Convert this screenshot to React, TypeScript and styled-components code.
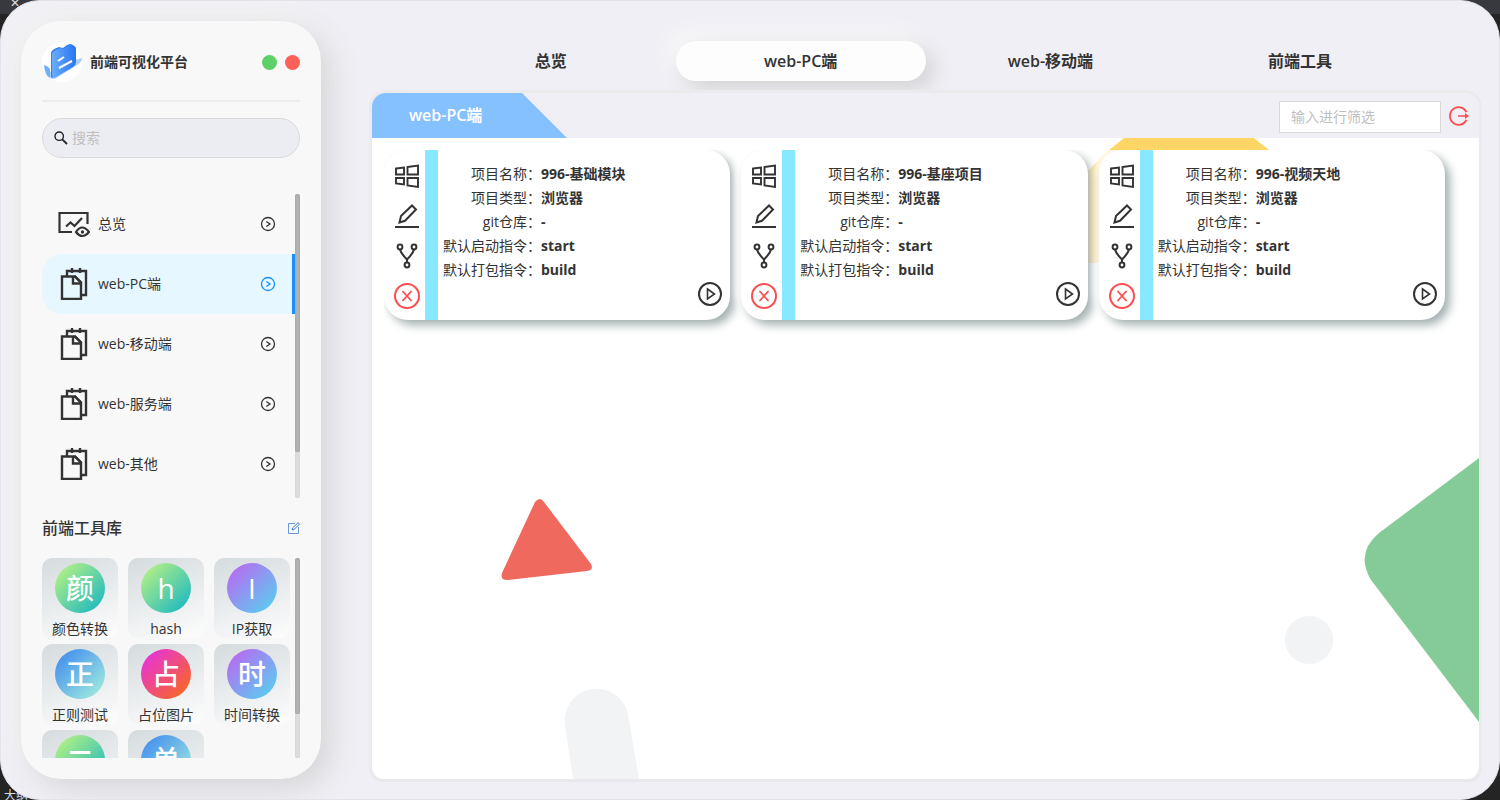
import React from 'react';
import styled, { createGlobalStyle, css } from 'styled-components';

const GlobalStyle = createGlobalStyle`
  *, *::before, *::after { box-sizing: border-box; }
  html, body, #root { height: 100%; }
  body {
    margin: 0;
    background: #242424;
    color: #333;
    font: 14px/24px "Open Sans", "Noto Sans CJK SC", sans-serif;
    overflow: hidden;
  }
  button, input { font: inherit; color: inherit; }
  button { border: 0; padding: 0; background: none; cursor: pointer; }
  h1, h2, p, dl, dd, ul { margin: 0; padding: 0; }
  ul { list-style: none; }
  svg { display: block; }
`;

const Desktop = styled.div`
  position: relative;
  min-height: 100%;
  height: 100%;
  background: linear-gradient(#38383f 14px, #242424 14px);
`;

const Stray = styled.span<{ $bottom?: boolean }>`
  position: absolute;
  left: ${p => (p.$bottom ? 4 : 10)}px;
  ${p => (p.$bottom ? 'bottom: -8px;' : 'top: -2px;')}
  color: #ddd;
  font-size: 12px;
  line-height: ${p => (p.$bottom ? 24 : 10)}px;
  white-space: nowrap;
`;

const Shell = styled.div`
  position: relative;
  display: flex;
  gap: 48px;
  height: 100%;
  padding: 20px;
  border: 1px solid #e4e3ea;
  border-radius: 40px;
  background: #f0eff5;
  overflow: hidden;
`;

const Sidebar = styled.aside`
  display: flex;
  flex-direction: column;
  flex: 0 0 300px;
  padding: 21px;
  border-radius: 40px;
  background: #f8f8f8;
  box-shadow: 10px 10px 30px #d6d6d8, -10px -10px 30px #f4f4f4, 0 0 2px #e4e4e4;
`;

const Brand = styled.header`
  display: flex;
  align-items: center;
  padding-bottom: 18px;
  border-bottom: 2px solid #ececec;
`;

const BrandName = styled.h1`
  flex: 1;
  margin-left: 8px;
  font-size: 14px;
  font-weight: 600;
`;

const Dot = styled.button<{ $color: string }>`
  width: 15px;
  height: 15px;
  margin-left: 8px;
  border-radius: 50%;
  background: ${p => p.$color};
`;

const SearchBox = styled.label`
  display: flex;
  align-items: center;
  gap: 4px;
  flex: 0 0 40px;
  margin-top: 16px;
  padding: 0 11px;
  border: 1px solid #d9d9d9;
  border-radius: 20px;
  background: #ecedf3;
`;

const SearchInput = styled.input`
  flex: 1;
  min-width: 0;
  padding: 0;
  border: 0;
  outline: 0;
  background: none;
  &::placeholder { color: #bfbfbf; opacity: 1; }
`;

const Scroller = styled.div`
  display: flex;
  justify-content: space-between;
  overflow: hidden;
`;

const NavScroller = styled(Scroller)`
  flex: 1;
  margin-top: 36px;
`;

const Track = styled.div`
  flex: 0 0 5px;
  border-radius: 3px;
  background: #dedede;
  box-shadow: inset 0 0 3px #d0d0d0;
`;

const Thumb = styled.div<{ $size: number }>`
  height: ${p => p.$size}%;
  border-radius: 3px;
  background: #b2b2b2;
  box-shadow: inset 0 0 2px #999;
`;

const NavList = styled.ul`
  flex: 1;
`;

const NavItem = styled.button<{ $active?: boolean }>`
  display: flex;
  align-items: center;
  gap: 8px;
  width: 100%;
  height: 60px;
  padding: 0 16px;
  border-right: 3px solid transparent;
  text-align: left;
  ${p => p.$active && css`
    border-right-color: #1890ff;
    border-radius: 20px 0 0 20px;
    background: #e6f7ff;
  `}
  span { flex: 1; }
  svg:last-child { color: ${p => (p.$active ? '#1890ff' : '#333')}; }
`;

const ToolHead = styled.div`
  display: flex;
  align-items: center;
  justify-content: space-between;
  margin: 18px 0;
`;

const ToolTitle = styled.h2`
  font-size: 16px;
  font-weight: 500;
  line-height: 24px;
`;

const ToolScroller = styled(Scroller)`
  flex: 0 0 200px;
`;

const ToolGrid = styled.div`
  display: grid;
  grid-template-columns: repeat(3, 76px);
  grid-auto-rows: 80px;
  gap: 6px 10px;
`;

const Tool = styled.button`
  display: flex;
  flex-direction: column;
  align-items: center;
  gap: 4px;
  padding-top: 5px;
  border-radius: 10px;
  background: linear-gradient(160deg, #d5dbde, #fdfdfd);
  white-space: nowrap;
`;

const ToolMark = styled.span<{ $fill: string }>`
  flex: 0 0 50px;
  width: 50px;
  border-radius: 50%;
  background: linear-gradient(135deg, ${p => p.$fill});
  color: #fff;
  font-size: 28px;
  line-height: 50px;
  font-weight: 500;
`;

const Main = styled.main`
  display: flex;
  flex-direction: column;
  flex: 1;
  min-width: 0;
`;

const Tabs = styled.nav`
  display: flex;
  padding: 20px 54px 9px 57px;
`;

const Tab = styled.button<{ $active?: boolean }>`
  flex: 1;
  height: 40px;
  border-radius: 20px;
  font-size: 16px;
  font-weight: 600;
  ${p => p.$active && css`
    background: #fdfdfe;
    box-shadow: 8px 8px 20px #d3d3d5, -8px -8px 20px #f8f8f8;
  `}
`;

const Panel = styled.section`
  position: relative;
  display: flex;
  flex-direction: column;
  flex: 1;
  border: 3px solid #ebebed;
  border-bottom: 0;
  border-radius: 17px 17px 14px 14px;
  margin-right: -3px;
  background: #f0eff5;
  overflow: hidden;
  box-shadow: 0 3px 0 #e9e9eb;
`;

const PanelHead = styled.div`
  display: flex;
  align-items: center;
  flex: 0 0 45px;
  padding-right: 10px;
`;

const PanelTitle = styled.h2`
  align-self: stretch;
  width: 195px;
  padding-left: 37px;
  background: #85c1ff;
  clip-path: polygon(0 0, 150px 0, 100% 100%, 0 100%);
  color: #fff;
  font-size: 16px;
  font-weight: 600;
  line-height: 45px;
`;

const Filter = styled.input`
  width: 162px;
  height: 32px;
  margin: 2px 8px 0 auto;
  padding: 0 11px;
  border: 1px solid #d9d9d9;
  background: #fff;
  outline: 0;
  &::placeholder { color: #bfbfbf; opacity: 1; }
`;

const Exit = styled.button`
  color: #ff4d4f;
`;

const Canvas = styled.div`
  position: relative;
  flex: 1;
  padding: 12px 10px 0 12px;
  background: #fff;
  overflow: hidden;
`;

const Backdrop = styled.svg`
  position: absolute;
  top: 0;
  right: 0;
`;

const Cards = styled.div`
  position: relative;
  display: grid;
  grid-template-columns: repeat(3, 1fr);
  gap: 11px;
  padding: 0 24px 24px 0;
  overflow: hidden;
`;

const Card = styled.article`
  display: flex;
  height: 170px;
  border-radius: 24px;
  background: #fff;
  box-shadow: 5px 5px 10px #a4afb0, -5px -5px 10px #fff;
`;

const Actions = styled.div`
  display: flex;
  flex-direction: column;
  align-items: center;
  gap: 12px;
  flex: 0 0 54px;
  padding: 12px 0 0 5px;
  border-right: 13px solid #87e8ff;
`;

const Action = styled.button<{ $danger?: boolean }>`
  color: ${p => (p.$danger ? '#ff4d4f' : '#333')};
`;

const Details = styled.dl`
  flex: 1;
  padding: 12px 0 0 5px;
`;

const Detail = styled.div`
  display: flex;
  dt { width: 98px; text-align: right; white-space: nowrap; }
  dd { font-weight: 700; white-space: nowrap; }
`;

const Run = styled.button`
  align-self: flex-end;
  margin: 0 7px 13px 0;
`;

const Logo = () => (
  <svg width="40" height="40" viewBox="0 0 40 40" aria-hidden="true">
    <defs>
      <linearGradient id="logoFace" x1="0" y1="0" x2="1" y2="0">
        <stop offset="0" stopColor="#6aacfc" />
        <stop offset="1" stopColor="#2775f4" />
      </linearGradient>
    </defs>
    <circle cx="20" cy="20" r="20" fill="#fff" />
    <path d="M6 31L33 18l7-2q0 4-5 7L16 35q-5 4-9 0Z" fill="#a9cffe" />
    <path d="M2 23q4 1 6 4v9q-5-2-6-13Z" fill="#6fb0fb" />
    <path d="M9 11q0-2 3-4l5-2 4 1 4-3 3-1q3 0 6 4l-2 3-21 8v19l-2-1Z" fill="#2f80f6" />
    <path d="M10 12q0-2 4-4l4-2 4 1 4-3 3-1q5 1 5 4v13q0 3-3 5L14 35q-4 2-4-2Z" fill="url(#logoFace)" />
    <path d="M16 19l6-4M17 26l13-7" stroke="#fff" strokeWidth="2" />
  </svg>
);

const SearchIcon = () => (
  <svg width="14" height="14" viewBox="0 0 14 14" fill="none" stroke="#222" strokeWidth="1.4">
    <circle cx="5.2" cy="5.2" r="4.2" /><path d="M8.3 8.3L13 13" strokeWidth="1.8" />
  </svg>
);

const OverviewIcon = () => (
  <svg width="32" height="32" viewBox="0 0 32 32" fill="none" stroke="#333" strokeWidth="2.2">
    <path d="M14 24H1.500V5H29.500v11" />
    <path d="M8 18.500l4.500-4 4 3.500 7.500-8" />
    <path d="M18 24q6-9 13 0-7 8-13 0Z" />
    <circle cx="24.500" cy="24" r="1.700" fill="#333" stroke="none" />
  </svg>
);

const FilesIcon = () => (
  <svg width="32" height="32" viewBox="0 0 32 32" fill="none" stroke="#333" strokeWidth="2.4">
    <path d="M4 8.500h13l6 6V31H4Z" />
    <path d="M15 9v6.500h8" />
    <path d="M9 8V3h19v24h-4M14 0v5M22 0v5" />
    <path d="M16.500 8l7 7" />
  </svg>
);

const CircleArrow = () => (
  <svg width="16" height="16" viewBox="0 0 16 16" fill="none" stroke="currentColor" strokeWidth="1.3">
    <circle cx="8" cy="8" r="6.500" /><path d="M6.300 5.500L10 8l-3.700 2.500" />
  </svg>
);

const EditIcon = () => (
  <svg width="12" height="12" viewBox="0 0 12 12" fill="none" stroke="#3b7bd4">
    <path d="M7 1.500H.5v10h10V5" opacity=".75" />
    <path d="M4 8l.5-2L10 .7l1.500 1.400L6 7.500Z" />
  </svg>
);

const WindowsIcon = () => (
  <svg width="28" height="28" viewBox="0 0 28 28" fill="none" stroke="currentColor" strokeWidth="1.900">
    <path d="M3 6.500l8-1v7H3ZM14.500 5L25 3.500v9H14.500ZM3 16h8v6.500l-8-1ZM14.500 16H25v9l-10.500-1.500Z" />
  </svg>
);

const PencilIcon = () => (
  <svg width="28" height="28" viewBox="0 0 28 28" fill="none" stroke="currentColor" strokeWidth="2">
    <path d="M2 25h24" /><path d="M6.500 20.500l1.500-6.500L19 3.500l4 4L12 18.800Z" />
  </svg>
);

const BranchIcon = () => (
  <svg width="28" height="28" viewBox="0 0 28 28" fill="none" stroke="currentColor" strokeWidth="2">
    <circle cx="7" cy="5" r="2.400" /><circle cx="21" cy="5" r="2.400" /><circle cx="14" cy="23" r="2.400" />
    <path d="M7 7.500q1 4 7 10 6-6 7-10M14 17v3.500" />
  </svg>
);

const CloseIcon = () => (
  <svg width="28" height="28" viewBox="0 0 28 28" fill="none" stroke="currentColor" strokeWidth="2">
    <circle cx="14" cy="14" r="12" /><path d="M9.500 9l9 10M18.500 9l-9 10" strokeWidth="1.800" />
  </svg>
);

const PlayIcon = () => (
  <svg width="26" height="26" viewBox="0 0 26 26" fill="none" stroke="currentColor" strokeWidth="2">
    <circle cx="13" cy="13" r="11" /><path d="M10.500 8l7 5-7 5Z" strokeWidth="1.600" />
  </svg>
);

const ExitIcon = () => (
  <svg width="20" height="20" viewBox="0 0 20 20" fill="none" stroke="currentColor" strokeWidth="1.700">
    <path d="M17.500 6a8.800 8.800 0 1 0 0 8M9 10h8" /><path d="M16 7l4 3-4 3Z" fill="currentColor" stroke="none" />
  </svg>
);

const GREEN = '#c3f77d, #10b3c8';
const PURPLE = '#c35ff0, #4fd8f1';
const BLUE = '#3a85ef, #a8f4dd';
const PINK = '#e42df0, #fb6d0c';

const NAV = ['总览', 'web-PC端', 'web-移动端', 'web-服务端', 'web-其他'];
const TABS = ['总览', 'web-PC端', 'web-移动端', '前端工具'];
const TOOLS = [
  ['颜', '颜色转换', GREEN], ['h', 'hash', GREEN], ['I', 'IP获取', PURPLE],
  ['正', '正则测试', BLUE], ['占', '占位图片', PINK], ['时', '时间转换', PURPLE],
  ['二', '二维码', GREEN], ['单', '单位转换', BLUE],
];
const PROJECTS = ['996-基础模块', '996-基座项目', '996-视频天地'];

const Project = ({ name }: { name: string }) => {
  const rows = [
    ['项目名称：', name], ['项目类型：', '浏览器'], ['git仓库：', '-'],
    ['默认启动指令：', 'start'], ['默认打包指令：', 'build'],
  ];
  return (
    <Card>
      <Actions>
        <Action aria-label="窗口"><WindowsIcon /></Action>
        <Action aria-label="编辑"><PencilIcon /></Action>
        <Action aria-label="分支"><BranchIcon /></Action>
        <Action $danger aria-label="删除"><CloseIcon /></Action>
      </Actions>
      <Details>
        {rows.map(([label, value]) => <Detail key={label}><dt>{label}</dt><dd>{value}</dd></Detail>)}
      </Details>
      <Run aria-label="启动"><PlayIcon /></Run>
    </Card>
  );
};

export default function App() {
  return (
    <Desktop>
      <GlobalStyle />
      <Stray $bottom>大纲</Stray>
      <Shell>
        <Sidebar>
          <Brand>
            <Logo />
            <BrandName>前端可视化平台</BrandName>
            <Dot $color="#5fd068" aria-label="最小化" />
            <Dot $color="#fc6058" aria-label="关闭" />
          </Brand>
          <SearchBox>
            <SearchIcon />
            <SearchInput placeholder="搜索" aria-label="搜索" />
          </SearchBox>
          <NavScroller>
            <NavList>
              {NAV.map((label, i) => (
                <li key={label}>
                  <NavItem $active={i === 1}>
                    {i === 0 ? <OverviewIcon /> : <FilesIcon />}
                    <span>{label}</span>
                    <CircleArrow />
                  </NavItem>
                </li>
              ))}
            </NavList>
            <Track><Thumb $size={85} /></Track>
          </NavScroller>
          <ToolHead>
            <ToolTitle>前端工具库</ToolTitle>
            <button aria-label="编辑工具"><EditIcon /></button>
          </ToolHead>
          <ToolScroller>
            <ToolGrid>
              {TOOLS.map(([mark, label, fill]) => (
                <Tool key={label}><ToolMark $fill={fill}>{mark}</ToolMark>{label}</Tool>
              ))}
            </ToolGrid>
            <Track><Thumb $size={78} /></Track>
          </ToolScroller>
        </Sidebar>
        <Main>
          <Tabs>
            {TABS.map((label, i) => <Tab key={label} $active={i === 1}>{label}</Tab>)}
          </Tabs>
          <Panel>
            <PanelHead>
              <PanelTitle>web-PC端</PanelTitle>
              <Filter placeholder="输入进行筛选" aria-label="筛选" />
              <Exit aria-label="退出"><ExitIcon /></Exit>
            </PanelHead>
            <Canvas>
              <Backdrop width="1107" height="641" viewBox="0 0 1107 641" aria-hidden="true">
                <path d="M703 125V60q3-16 13-27l14-15q4-4 7-6l15-12h130l15 12 30 24v89Z" fill="#ffd666" />
                <path d="M163 364q5-6 9 0l47 62q3 6-4 7l-80 9q-7 0-5-7Z" fill="#f0695f" />
                <path d="M201 641l-8-54a32 32 0 0 1 63-11l11 65Z" fill="#f1f3f5" />
                <circle cx="937" cy="502" r="24" fill="#f1f3f5" />
                <path d="M1107 320l-100 75q-24 20-8 47l108 142Z" fill="#84cb98" />
              </Backdrop>
              <Cards>{PROJECTS.map(name => <Project key={name} name={name} />)}</Cards>
            </Canvas>
          </Panel>
        </Main>
      </Shell>
      <Stray>✕</Stray>
    </Desktop>
  );
}
